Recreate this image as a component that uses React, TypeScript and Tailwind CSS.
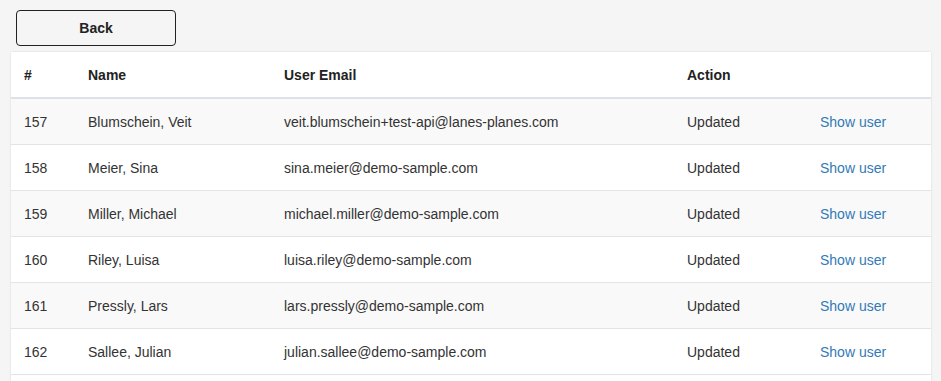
import React from "react";

const rows = [
  { id: 157, name: "Blumschein, Veit", email: "veit.blumschein+test-api@lanes-planes.com" },
  { id: 158, name: "Meier, Sina", email: "sina.meier@demo-sample.com" },
  { id: 159, name: "Miller, Michael", email: "michael.miller@demo-sample.com" },
  { id: 160, name: "Riley, Luisa", email: "luisa.riley@demo-sample.com" },
  { id: 161, name: "Pressly, Lars", email: "lars.pressly@demo-sample.com" },
  { id: 162, name: "Sallee, Julian", email: "julian.sallee@demo-sample.com" },
];

const cols = "grid grid-cols-[64px_196px_403px_133px_1fr] pl-[13px] items-center";

export default function App() {
  return (
    <div
      className="h-[381px] w-[941px] bg-[#f5f5f5] text-[14px] text-[#333] overflow-hidden"
      style={{ fontFamily: '"Liberation Sans", Arial, sans-serif' }}
    >
      <div className="pt-[10px] pl-[16px]">
        <button className="w-[160px] h-[36px] border border-[#222] rounded-[4px] bg-[#f5f5f5] font-bold text-[14px] text-[#222]">
          Back
        </button>
      </div>
      <div className="mt-[6px] ml-[11px] w-[920px] bg-white shadow-[0_0_2px_rgba(0,0,0,0.12)]">
        <div className={`${cols} h-[47px] pt-[2px] border-b-2 border-[#dfe1e8] font-bold text-[#222]`}>
          <div>#</div>
          <div>Name</div>
          <div>User Email</div>
          <div>Action</div>
          <div></div>
        </div>
        {rows.map((r, i) => (
          <div
            key={r.id}
            className={`${cols} h-[46px] pt-[2px] border-b border-[#e3e3ea] ${i % 2 === 0 ? "bg-[#f9f9f9]" : "bg-white"}`}
          >
            <div>{r.id}</div>
            <div>{r.name}</div>
            <div>{r.email}</div>
            <div>Updated</div>
            <div className="text-[#337ab7]">Show user</div>
          </div>
        ))}
        <div className="h-[20px] bg-white"></div>
      </div>
    </div>
  );
}
